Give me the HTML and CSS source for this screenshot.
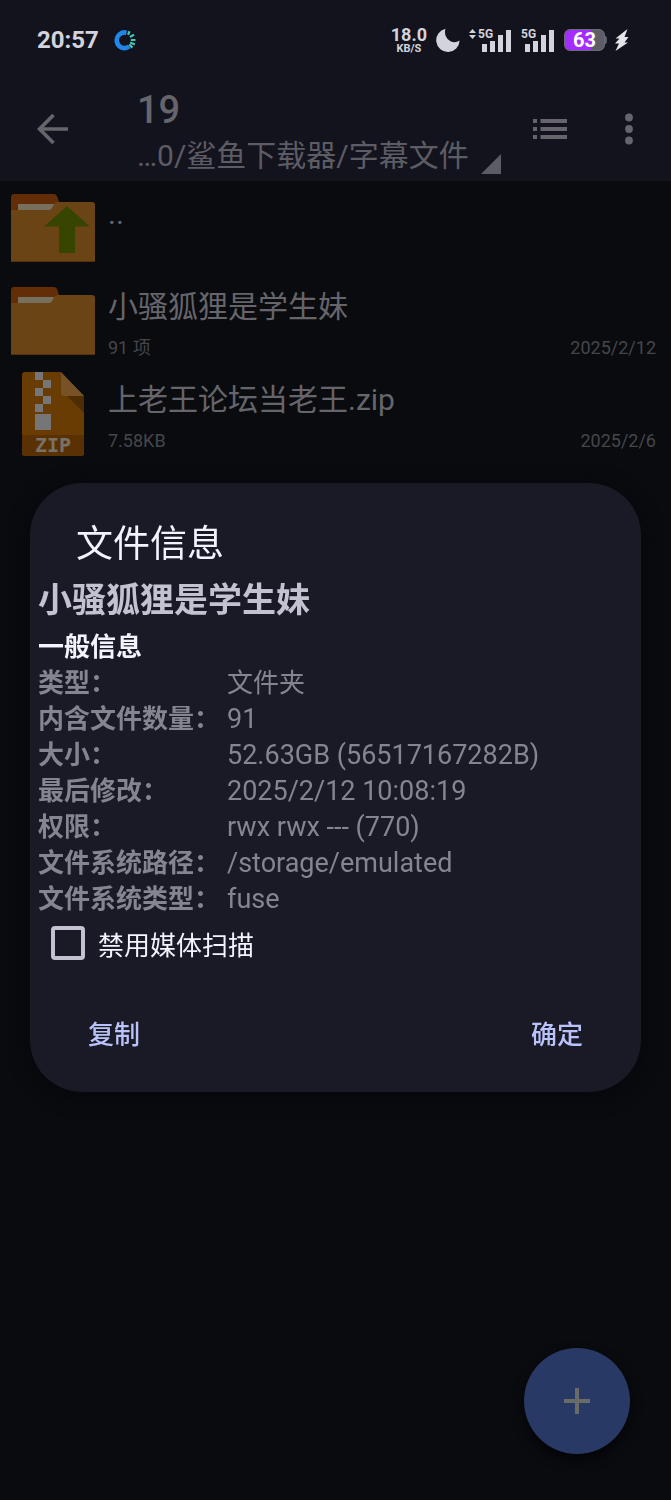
FILE: index.html
```html
<!DOCTYPE html>
<html lang="zh-CN">
<head>
<meta charset="utf-8">
<meta name="viewport" content="width=device-width, initial-scale=1">
<title>文件信息</title>
<link rel="stylesheet" href="styles.css">
</head>
<body>
<div class="app">
  <header class="header">
    <div class="status">
      <span class="clock">20:57</span>
      <svg class="ring" viewBox="0 0 22 22" width="22" height="22" aria-hidden="true">
        <path d="M12.500 3.700A7.800 7.800 0 1 0 15.200 17.500" fill="none" stroke="#1f86ea" stroke-width="4.600"/>
        <g stroke="#45c9b4" stroke-width="2.200"><path d="M14 5.800 15.600 2.300M16 8 20 5.600M16.800 11h4.700M16.200 13.500 20.800 15.400M15.200 15.500 18.400 18.600"/></g>
      </svg>
      <div class="status-right">
        <span class="speed"><span class="speed-value">18.0</span><span class="speed-unit">KB/S</span></span>
        <svg class="moon" viewBox="0 0 24 24" width="24" height="24" aria-hidden="true"><path d="M9.500.8A10.400 10.400 0 0 0 14.500 13.300 10 10 0 0 0 23.600 12.600 11.700 11.700 0 1 1 9.500.8Z" fill="#d3d3dc"/></svg>
        <svg class="signal" viewBox="0 0 43 26" width="43" height="26" aria-hidden="true">
          <path d="M0 6 3.500 2 7 6ZM0 8h7l-3.500 4Z"/><text x="9" y="11">5G</text>
          <path d="M13 17h5v8h-5ZM21 14h5v11h-5ZM29 8h5v17h-5ZM37 3h5v22h-5Z"/>
        </svg>
        <svg class="signal" viewBox="0 0 34 26" width="34" height="26" aria-hidden="true">
          <text x="0" y="11">5G</text>
          <path d="M4 17h5v8h-5ZM12 14h5v11h-5ZM20 8h5v17h-5ZM28 3h5v22h-5Z"/>
        </svg>
        <span class="battery">63</span>
        <svg class="bolt" viewBox="0 0 15 24" width="15" height="24" aria-hidden="true"><path d="M13.500 1 1.500 10.500H5.500L1 15.500H5L1.500 23 14 14.500H10.500L14.500 9H10.500Z" fill="#e4e4ea"/></svg>
      </div>
    </div>
    <div class="toolbar">
      <button class="icon-button back" aria-label="返回">
        <svg viewBox="0 0 32 32" width="32" height="32"><path d="M31 16H3M16.500 2 2.500 16l14 14" fill="none" stroke="currentColor" stroke-width="3.600"/></svg>
      </button>
      <div class="heading">
        <h1 class="folder">19</h1>
        <button class="path"><span>…0/鲨鱼下载器/字幕文件</span><svg viewBox="0 0 20 20" width="20" height="20" aria-hidden="true"><path d="M20 0V20H0Z" fill="currentColor"/></svg></button>
      </div>
      <button class="icon-button" aria-label="视图">
        <svg viewBox="0 0 36 20" width="36" height="20"><path d="M1 0h4v4H1ZM8.500 0H35v4H8.500ZM1 8h4v4H1ZM8.500 8H35v4H8.500ZM1 16h4v4H1ZM8.500 16H35v4H8.500Z" fill="currentColor"/></svg>
      </button>
      <button class="icon-button more" aria-label="更多">
        <svg viewBox="0 0 8 32" width="8" height="32"><g fill="currentColor"><circle cx="4" cy="4.500" r="3.900"/><circle cx="4" cy="16" r="3.900"/><circle cx="4" cy="27.500" r="3.900"/></g></svg>
      </button>
    </div>
  </header>

  <main>
    <ul class="files">
      <li class="file">
        <svg class="file-icon" viewBox="0 0 84 84" width="84" height="84" aria-hidden="true">
          <path d="M0 26V11q0-3 3-3H43q2 0 3 2l3 9v7Z" fill="#632d07"/><path d="M7 18H43v6H7Z" fill="#77705f"/>
          <path d="M0 24H38q2 0 3-2l2-4q1-2 3-2H81q3 0 3 3V76H0Z" fill="#6b4415"/><path d="M0 75H84v1H0Z" fill="#503210"/>
          <path d="M56 20 79 40.500H64V67H48V40.500H33Z" fill="#374500"/>
        </svg>
        <div class="file-body"><div class="file-name">..</div></div>
      </li>
      <li class="file">
        <svg class="file-icon" viewBox="0 0 84 84" width="84" height="84" aria-hidden="true">
          <path d="M0 26V11q0-3 3-3H43q2 0 3 2l3 9v7Z" fill="#632d07"/><path d="M7 18H43v6H7Z" fill="#77705f"/>
          <path d="M0 24H38q2 0 3-2l2-4q1-2 3-2H81q3 0 3 3V76H0Z" fill="#6b4415"/><path d="M0 75H84v1H0Z" fill="#503210"/>
        </svg>
        <div class="file-body">
          <div class="file-name">小骚狐狸是学生妹</div>
          <div class="file-meta"><span>91 项</span><span>2025/2/12</span></div>
        </div>
      </li>
      <li class="file">
        <svg class="file-icon" viewBox="0 0 84 84" width="84" height="84" aria-hidden="true">
          <path d="M14 0H49.500L73 24V81q0 3-3 3H14q-3 0-3-3V3q0-3 3-3Z" fill="#683c03"/>
          <path d="M50 0 73 24H53q-3 0-3-3Z" fill="#775227"/><path d="M56 24H73V41Z" fill="#4e2c04"/>
          <path d="M11 63H73V81q0 3-3 3H14q-3 0-3-3Z" fill="#593104"/>
          <path d="M24 0h8v8h-8ZM32 8h8v8h-8ZM24 16h8v8h-8ZM32 24h8v8h-8ZM24 32h8v8h-8ZM24 42H40V58H24Z" fill="#777677"/>
          <text class="zip-label" x="42" y="80" text-anchor="middle">ZIP</text>
        </svg>
        <div class="file-body">
          <div class="file-name">上老王论坛当老王.zip</div>
          <div class="file-meta"><span>7.58KB</span><span>2025/2/6</span></div>
        </div>
      </li>
    </ul>
  </main>
  <button class="add" aria-label="添加"><svg viewBox="0 0 28 28" width="28" height="28"><path d="M14 1V27M1 14H27" stroke="#686b68" stroke-width="4"/></svg></button>
</div>

<div class="overlay">
  <section class="dialog" role="dialog" aria-modal="true" aria-labelledby="dialog-title">
    <h2 class="dialog-title" id="dialog-title">文件信息</h2>
    <h3 class="item-name">小骚狐狸是学生妹</h3>
    <h4 class="section-title">一般信息</h4>
    <table class="details">
      <tbody>
        <tr><th scope="row">类型：</th><td class="chinese">文件夹</td></tr>
        <tr><th scope="row">内含文件数量：</th><td>91</td></tr>
        <tr><th scope="row">大小：</th><td>52.63GB (56517167282B)</td></tr>
        <tr><th scope="row">最后修改：</th><td>2025/2/12 10:08:19</td></tr>
        <tr><th scope="row">权限：</th><td>rwx rwx --- (770)</td></tr>
        <tr><th scope="row">文件系统路径：</th><td>/storage/emulated</td></tr>
        <tr><th scope="row">文件系统类型：</th><td>fuse</td></tr>
      </tbody>
    </table>
    <label class="check" for="no-scan"><input type="checkbox" id="no-scan"><span>禁用媒体扫描</span></label>
    <div class="actions">
      <button class="action">复制</button>
      <button class="action">确定</button>
    </div>
  </section>
</div>
</body>
</html>
```
FILE: styles.css
```css
* { box-sizing: border-box; }

body {
  margin: 0;
  background: #0a0b0f;
  color: #65656b;
  font-family: Roboto, "Noto Sans CJK SC", sans-serif;
}

button {
  margin: 0;
  padding: 0;
  border: 0;
  background: none;
  color: inherit;
  font: inherit;
}

h1, h2, h3, h4, ul { margin: 0; padding: 0; }
svg { display: block; flex: none; }

.app { min-height: 100vh; }
.header { background: #13131e; }

.status {
  display: flex;
  align-items: center;
  height: 76px;
  padding: 4px 42px 0 37px;
  color: #d3d3dc;
}
.clock { font-size: 24px; font-weight: 700; }
.ring { margin-left: 15px; }
.status-right { display: flex; align-items: center; margin-left: auto; gap: 9px; }
.speed { display: flex; flex-direction: column; align-items: center; font-weight: 700; }
.speed-value { font-size: 18px; line-height: 17px; }
.speed-unit { font-size: 11px; line-height: 12px; }
.signal { fill: #d3d3dc; }
.signal text { font: 700 12px Roboto, sans-serif; }
.battery {
  position: relative;
  width: 41px;
  border: 1px solid #6b6b76;
  border-radius: 6px;
  background: linear-gradient(90deg, #a42cff 66%, #5e5d67 66%);
  color: #fff;
  font-size: 20px;
  font-weight: 700;
  line-height: 20px;
  text-align: center;
}
.battery::after {
  content: "";
  position: absolute;
  top: 6px;
  right: -3px;
  width: 2px;
  height: 8px;
  border-radius: 0 2px 2px 0;
  background: #5e5d67;
}

.toolbar {
  display: flex;
  align-items: center;
  height: 105px;
  padding: 0 38px 0 37px;
}
.heading { flex: 1; min-width: 0; margin-left: 68px; padding-top: 8px; }
.folder { font-size: 38px; font-weight: 500; line-height: 46px; }
.path {
  display: flex;
  align-items: center;
  gap: 12px;
  color: #5c5c64;
  font-size: 30px;
  line-height: 46px;
  white-space: nowrap;
}
.path svg { margin-top: 16px; }
.more { margin-left: 57px; }

.files { list-style: none; }
.file { display: flex; align-items: center; height: 93px; padding: 0 15px 0 11px; gap: 13px; }
.file-body { flex: 1; align-self: stretch; padding-top: 13px; }
.file-name { font-size: 30px; line-height: 40px; }
.file-meta {
  display: flex;
  justify-content: space-between;
  padding-top: 9px;
  color: #45464b;
  font-size: 18px;
  line-height: 24px;
}
.zip-label { fill: #777166; font: 700 20px "DejaVu Sans Mono", monospace; }

.add {
  position: fixed;
  right: 41px;
  bottom: 46px;
  display: grid;
  place-items: center;
  width: 106px;
  height: 106px;
  border-radius: 50%;
  background: #293965;
  box-shadow: 0 6px 12px #040508;
}

.overlay {
  position: fixed;
  inset: 0;
  display: flex;
  align-items: center;
  padding: 75px 30px 0;
}
.dialog {
  flex: 1;
  padding: 36px 8px 24px;
  border-radius: 52px;
  background: #191a26;
  box-shadow: 0 4px 20px #06070a;
}
.dialog-title { padding-left: 38px; color: #f3f3ff; font-size: 37px; font-weight: 400; line-height: 52px; }
.item-name { color: #c3c2d0; font-size: 34px; font-weight: 700; line-height: 58px; }
.section-title { color: #f3f3ff; font-size: 26px; font-weight: 700; line-height: 36px; }
.details { border-collapse: collapse; color: #85858f; font-size: 26px; line-height: 36px; }
.details th, .details td { height: 36px; padding: 0; text-align: left; line-height: 36px; vertical-align: middle; }
.details th { width: 189px; font-weight: 700; white-space: nowrap; }
.details td { font-size: 27px; }
.details .chinese { font-size: 26px; }
.check {
  display: flex;
  align-items: center;
  gap: 13px;
  height: 52px;
  padding-left: 13px;
  color: #f3f3ff;
  font-size: 26px;
}
.check input {
  appearance: none;
  width: 34px;
  height: 34px;
  margin: 0;
  border: 4px solid #c3c2d0;
  border-radius: 4px;
}
.actions { display: flex; justify-content: space-between; margin-top: 27px; padding: 0 30px; }
.action { height: 72px; padding: 0 20px; color: #b9c3fa; font-size: 26px; font-weight: 500; }
```
